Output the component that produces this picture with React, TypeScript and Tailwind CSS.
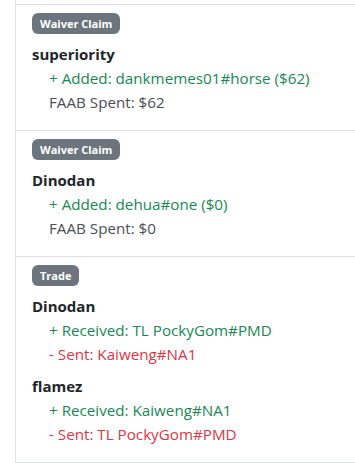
import React from "react";

type Line = { kind: "add" | "sent" | "plain"; text: string };
type Block = { name: string; lines: Line[] };
type Item = { badge: string; blocks: Block[] };

const items: Item[] = [
  {
    badge: "Waiver Claim",
    blocks: [
      {
        name: "superiority",
        lines: [
          { kind: "add", text: "+ Added: dankmemes01#horse ($62)" },
          { kind: "plain", text: "FAAB Spent: $62" },
        ],
      },
    ],
  },
  {
    badge: "Waiver Claim",
    blocks: [
      {
        name: "Dinodan",
        lines: [
          { kind: "add", text: "+ Added: dehua#one ($0)" },
          { kind: "plain", text: "FAAB Spent: $0" },
        ],
      },
    ],
  },
  {
    badge: "Trade",
    blocks: [
      {
        name: "Dinodan",
        lines: [
          { kind: "add", text: "+ Received: TL PockyGom#PMD" },
          { kind: "sent", text: "- Sent: Kaiweng#NA1" },
        ],
      },
      {
        name: "flamez",
        lines: [
          { kind: "add", text: "+ Received: Kaiweng#NA1" },
          { kind: "sent", text: "- Sent: TL PockyGom#PMD" },
        ],
      },
    ],
  },
];

function lineClass(kind: Line["kind"]) {
  if (kind === "add") return "text-[#198754]";
  if (kind === "sent") return "text-[#dc3545]";
  return "text-[#495057]";
}

export default function App() {
  return (
    <div
      className="w-[355px] h-[463px] overflow-hidden bg-white"
      style={{ fontFamily: '"Open Sans", "Noto Sans", sans-serif' }}
    >
      <div className="ml-[15px] w-[360px] border-l border-[#dee2e6]">
        <div className="h-[4px]" />
        {items.map((item, i) => (
          <div
            key={i}
            className="border-t border-[#dee2e6] last:border-b px-4 pt-2 pb-2"
          >
            <div className="mb-2 flex">
              <span className="flex h-[21px] items-center rounded-[6px] bg-[#6c757d] px-[8px] text-[11px] font-bold leading-none text-white">
                {item.badge}
              </span>
            </div>
            {item.blocks.map((b, j) => (
              <div key={j} className="mb-2">
                <div className="text-[15px] font-bold leading-[24px] text-[#212529]">
                  {b.name}
                </div>
                {b.lines.map((l, k) => (
                  <div
                    key={k}
                    className={`pl-[17px] text-[15.2px] leading-[24px] ${lineClass(l.kind)}`}
                  >
                    {l.text}
                  </div>
                ))}
              </div>
            ))}
          </div>
        ))}
      </div>
    </div>
  );
}
